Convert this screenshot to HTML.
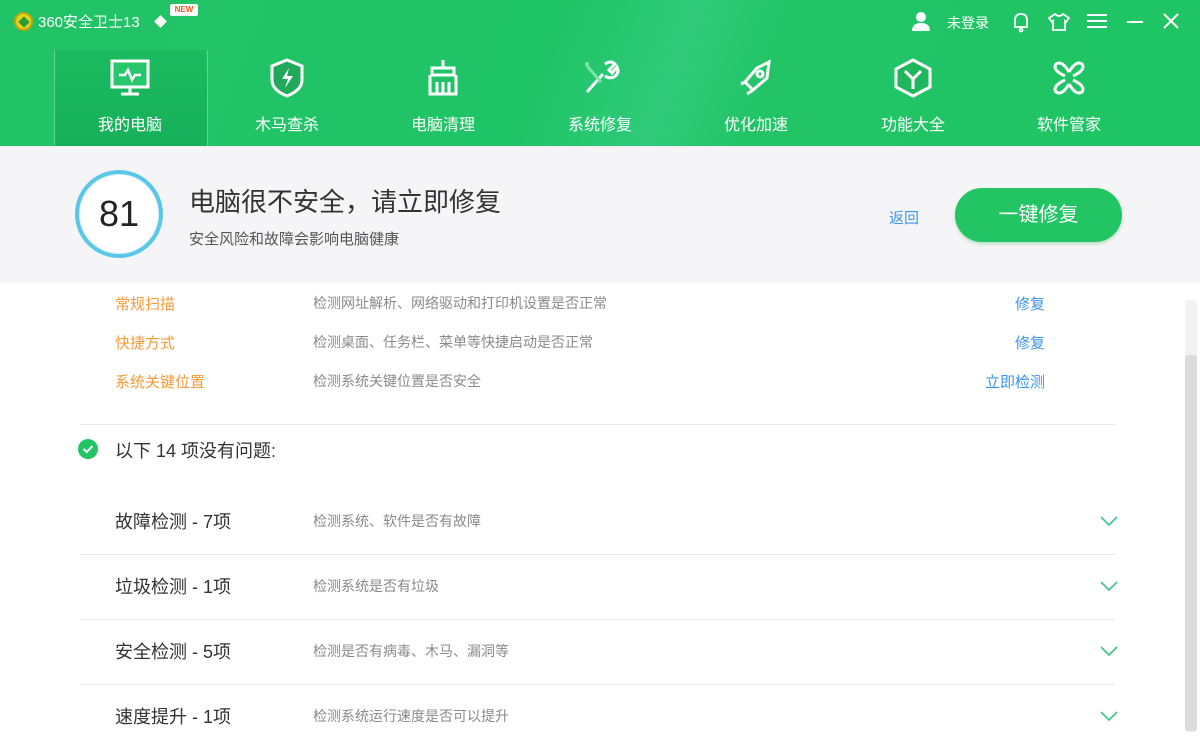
<!DOCTYPE html>
<html><head><meta charset="utf-8"><style>
*{margin:0;padding:0;box-sizing:border-box}
body{width:1200px;height:756px;overflow:hidden;background:#fff;font-family:"Liberation Sans","Noto Sans CJK SC",sans-serif;position:relative}
.hdr{position:absolute;left:0;top:0;width:1200px;height:146px;background:linear-gradient(110deg,#22c366 0%,#1fc466 45%,#30ca7a 56%,#22c466 64%,#1ec464 100%)}
.act{position:absolute;left:54px;top:50px;width:154px;height:96px;background:linear-gradient(180deg,#1dbb60,#16b05a);border-left:1px solid #5bd890;border-right:1px solid #5bd890}
.tab{position:absolute;top:58px;width:156px;text-align:center;color:#fff;font-size:16px}
.tab svg{display:block;margin:0 auto 13px}
.t{position:absolute;color:#fff}
.status{position:absolute;left:0;top:146px;width:1200px;height:137px;background:#f5f5f7}
.a{position:absolute;white-space:nowrap}
.or{color:#f59b3a;font-size:15px;left:115px}
.ds{color:#8a8a8a;font-size:14px;left:313px}
.bl{color:#3d96e8;font-size:15px;right:155px}
.rt{color:#333;font-size:18px;left:115px}
.line{position:absolute;left:80px;width:1035px;height:1px;background:#e8e8e8}
.chev{position:absolute;left:1100px}
</style></head><body>
<div class="hdr"></div>
<div class="act"></div>
<div style="position:absolute;left:14px;top:12px;width:19px;height:19px;border-radius:50%;background:#e6d21c;border:2px solid #b8a80f"></div>
<div style="position:absolute;left:20px;top:18px;width:8px;height:8px;background:#2a9a3a;transform:rotate(45deg)"></div>
<div class="t" style="left:38px;top:11px;font-size:15px">360安全卫士13</div>
<div style="position:absolute;left:156px;top:17px;width:9px;height:9px;background:#fff;transform:rotate(45deg)"></div>
<div style="position:absolute;left:170px;top:4px;width:28px;height:12px;background:#fff;border-radius:2px;font-size:8px;color:#f05a28;text-align:center;font-weight:bold;line-height:12px">NEW</div>
<svg class="a" style="left:911px;top:11px" width="20" height="20" viewBox="0 0 20 20"><circle cx="10" cy="6" r="5" fill="#fff"/><path d="M1 20 Q1 12 10 12 Q19 12 19 20Z" fill="#fff"/></svg>
<div class="t" style="left:947px;top:13px;font-size:14px">未登录</div>
<svg class="a" style="left:1011px;top:11px" width="20" height="22" viewBox="0 0 20 22" fill="none" stroke="#fff" stroke-width="1.8"><path d="M4 16 L4 9 Q4 3 10 3 Q16 3 16 9 L16 16 Z"/><circle cx="10" cy="19" r="1.5"/></svg>
<svg class="a" style="left:1048px;top:12px" width="22" height="20" viewBox="0 0 22 20" fill="none" stroke="#fff" stroke-width="1.8"><path d="M7 2 L1 6 L4 10 L5 9 L5 18 L17 18 L17 9 L18 10 L21 6 L15 2 Q11 6 7 2Z"/></svg>
<svg class="a" style="left:1087px;top:13px" width="20" height="16" viewBox="0 0 20 16" stroke="#fff" stroke-width="2"><path d="M0 2H20M0 8H20M0 14H20"/></svg>
<div class="a" style="left:1127px;top:21px;width:16px;height:2px;background:#fff"></div>
<svg class="a" style="left:1163px;top:13px" width="16" height="16" viewBox="0 0 16 16" stroke="#fff" stroke-width="2"><path d="M1 1L15 15M15 1L1 15"/></svg>
<div class="tab" style="left:52px"><svg width="42" height="40" viewBox="0 0 42 40" fill="none" stroke="#fff" stroke-width="3"><rect x="3" y="3" width="36" height="26" fill="#29c76c"/><path d="M21 29V35M12 36H30"/><path d="M10 17H16L19 12L23 22L26 17H32" stroke-width="2.5"/></svg>我的电脑</div>
<div class="tab" style="left:209px"><svg width="42" height="40" viewBox="0 0 42 40" fill="none" stroke="#fff" stroke-width="3"><path d="M21 2L36 8V22Q36 32 21 38Q6 32 6 22V8Z" fill="#21a85a"/><path d="M23 10L16 21H22L19 30L27 18H21Z" fill="#fff" stroke="none"/></svg>木马查杀</div>
<div class="tab" style="left:365px"><svg width="42" height="40" viewBox="0 0 42 40" fill="none" stroke="#fff" stroke-width="3"><path d="M21 2V10M10 10H32V17H10Z"/><path d="M8 17V36H34V17M15 24V36M21 24V36M27 24V36"/></svg>电脑清理</div>
<div class="tab" style="left:522px"><svg width="42" height="40" viewBox="0 0 42 40" fill="none" stroke="#fff" stroke-width="3"><path d="M8 34L24 16M26 6Q32 2 36 6L30 12L33 15L38 9Q41 15 35 19Q30 21 26 18"/><path d="M8 8L22 24" stroke="#7be6a4"/><circle cx="8" cy="6" r="2" fill="#7be6a4" stroke="none"/></svg>系统修复</div>
<div class="tab" style="left:678px"><svg width="42" height="40" viewBox="0 0 42 40" fill="none" stroke="#fff" stroke-width="3"><path d="M34 4L32 20L18 32L10 24L22 10Z"/><circle cx="25" cy="16" r="3"/><path d="M18 32L12 36M10 24L6 26" /></svg>优化加速</div>
<div class="tab" style="left:835px"><svg width="42" height="40" viewBox="0 0 42 40" fill="none" stroke="#fff" stroke-width="3"><path d="M21 2L38 11V29L21 38L4 29V11Z" fill="#20b65c"/><path d="M13 13L21 21L29 13M21 21V31"/></svg>功能大全</div>
<div class="tab" style="left:991px"><svg width="42" height="40" viewBox="0 0 42 40" fill="none" stroke="#fff" stroke-width="3"><path d="M21 14Q14 2 8 6Q4 12 17 18M21 14Q28 2 34 6Q38 12 25 18M21 26Q14 38 8 34Q4 28 17 22M21 26Q28 38 34 34Q38 28 25 22"/></svg>软件管家</div>
<div class="status"></div>
<div class="a" style="left:75px;top:170px;width:88px;height:88px;border-radius:50%;border:4px solid #5bc7e8;background:#fff;box-shadow:0 0 0 1px #d5eff8 inset"></div>
<div class="a" style="left:75px;top:193px;width:88px;text-align:center;font-size:36px;color:#222">81</div>
<div class="a" style="left:189px;top:182px;font-size:26px;color:#333">电脑很不安全，请立即修复</div>
<div class="a" style="left:189px;top:228px;font-size:15px;color:#555">安全风险和故障会影响电脑健康</div>
<div class="a" style="left:889px;top:207px;font-size:15px;color:#3d96e8">返回</div>
<div class="a" style="left:955px;top:188px;width:167px;height:54px;border-radius:27px;background:#22c463;color:#fff;font-size:20px;text-align:center;line-height:54px;box-shadow:0 2px 3px rgba(0,150,60,.25)">一键修复</div>
<div class="a or" style="top:293px">常规扫描</div><div class="a ds" style="top:293px">检测网址解析、网络驱动和打印机设置是否正常</div><div class="a bl" style="top:293px">修复</div>
<div class="a or" style="top:332px">快捷方式</div><div class="a ds" style="top:332px">检测桌面、任务栏、菜单等快捷启动是否正常</div><div class="a bl" style="top:332px">修复</div>
<div class="a or" style="top:371px">系统关键位置</div><div class="a ds" style="top:371px">检测系统关键位置是否安全</div><div class="a bl" style="top:371px">立即检测</div>
<div class="line" style="top:424px"></div>
<svg class="a" style="left:78px;top:439px" width="20" height="20" viewBox="0 0 20 20"><circle cx="10" cy="10" r="10" fill="#22c463"/><path d="M5.5 10L8.8 13L14.5 7" stroke="#fff" stroke-width="2" fill="none"/></svg>
<div class="a" style="left:115px;top:437px;font-size:18px;color:#333">以下 14 项没有问题:</div>
<div class="a rt" style="top:508px">故障检测 - 7项</div><div class="a ds" style="top:511px">检测系统、软件是否有故障</div>
<div class="line" style="top:554px"></div>
<div class="a rt" style="top:573px">垃圾检测 - 1项</div><div class="a ds" style="top:576px">检测系统是否有垃圾</div>
<div class="line" style="top:619px"></div>
<div class="a rt" style="top:638px">安全检测 - 5项</div><div class="a ds" style="top:641px">检测是否有病毒、木马、漏洞等</div>
<div class="line" style="top:684px"></div>
<div class="a rt" style="top:703px">速度提升 - 1项</div><div class="a ds" style="top:706px">检测系统运行速度是否可以提升</div>
<svg class="chev" style="top:516px" width="18" height="10" viewBox="0 0 18 10"><path d="M1 1L9 9L17 1" stroke="#3cc48a" stroke-width="1.6" fill="none"/></svg>
<svg class="chev" style="top:581px" width="18" height="10" viewBox="0 0 18 10"><path d="M1 1L9 9L17 1" stroke="#3cc48a" stroke-width="1.6" fill="none"/></svg>
<svg class="chev" style="top:646px" width="18" height="10" viewBox="0 0 18 10"><path d="M1 1L9 9L17 1" stroke="#3cc48a" stroke-width="1.6" fill="none"/></svg>
<svg class="chev" style="top:711px" width="18" height="10" viewBox="0 0 18 10"><path d="M1 1L9 9L17 1" stroke="#3cc48a" stroke-width="1.6" fill="none"/></svg>
<div class="a" style="left:1185px;top:300px;width:12px;height:432px;background:#f2f2f2;border-radius:3px"></div>
<div class="a" style="left:1185px;top:355px;width:12px;height:376px;background:#dcdcdc;border-radius:3px"></div>
</body></html>
